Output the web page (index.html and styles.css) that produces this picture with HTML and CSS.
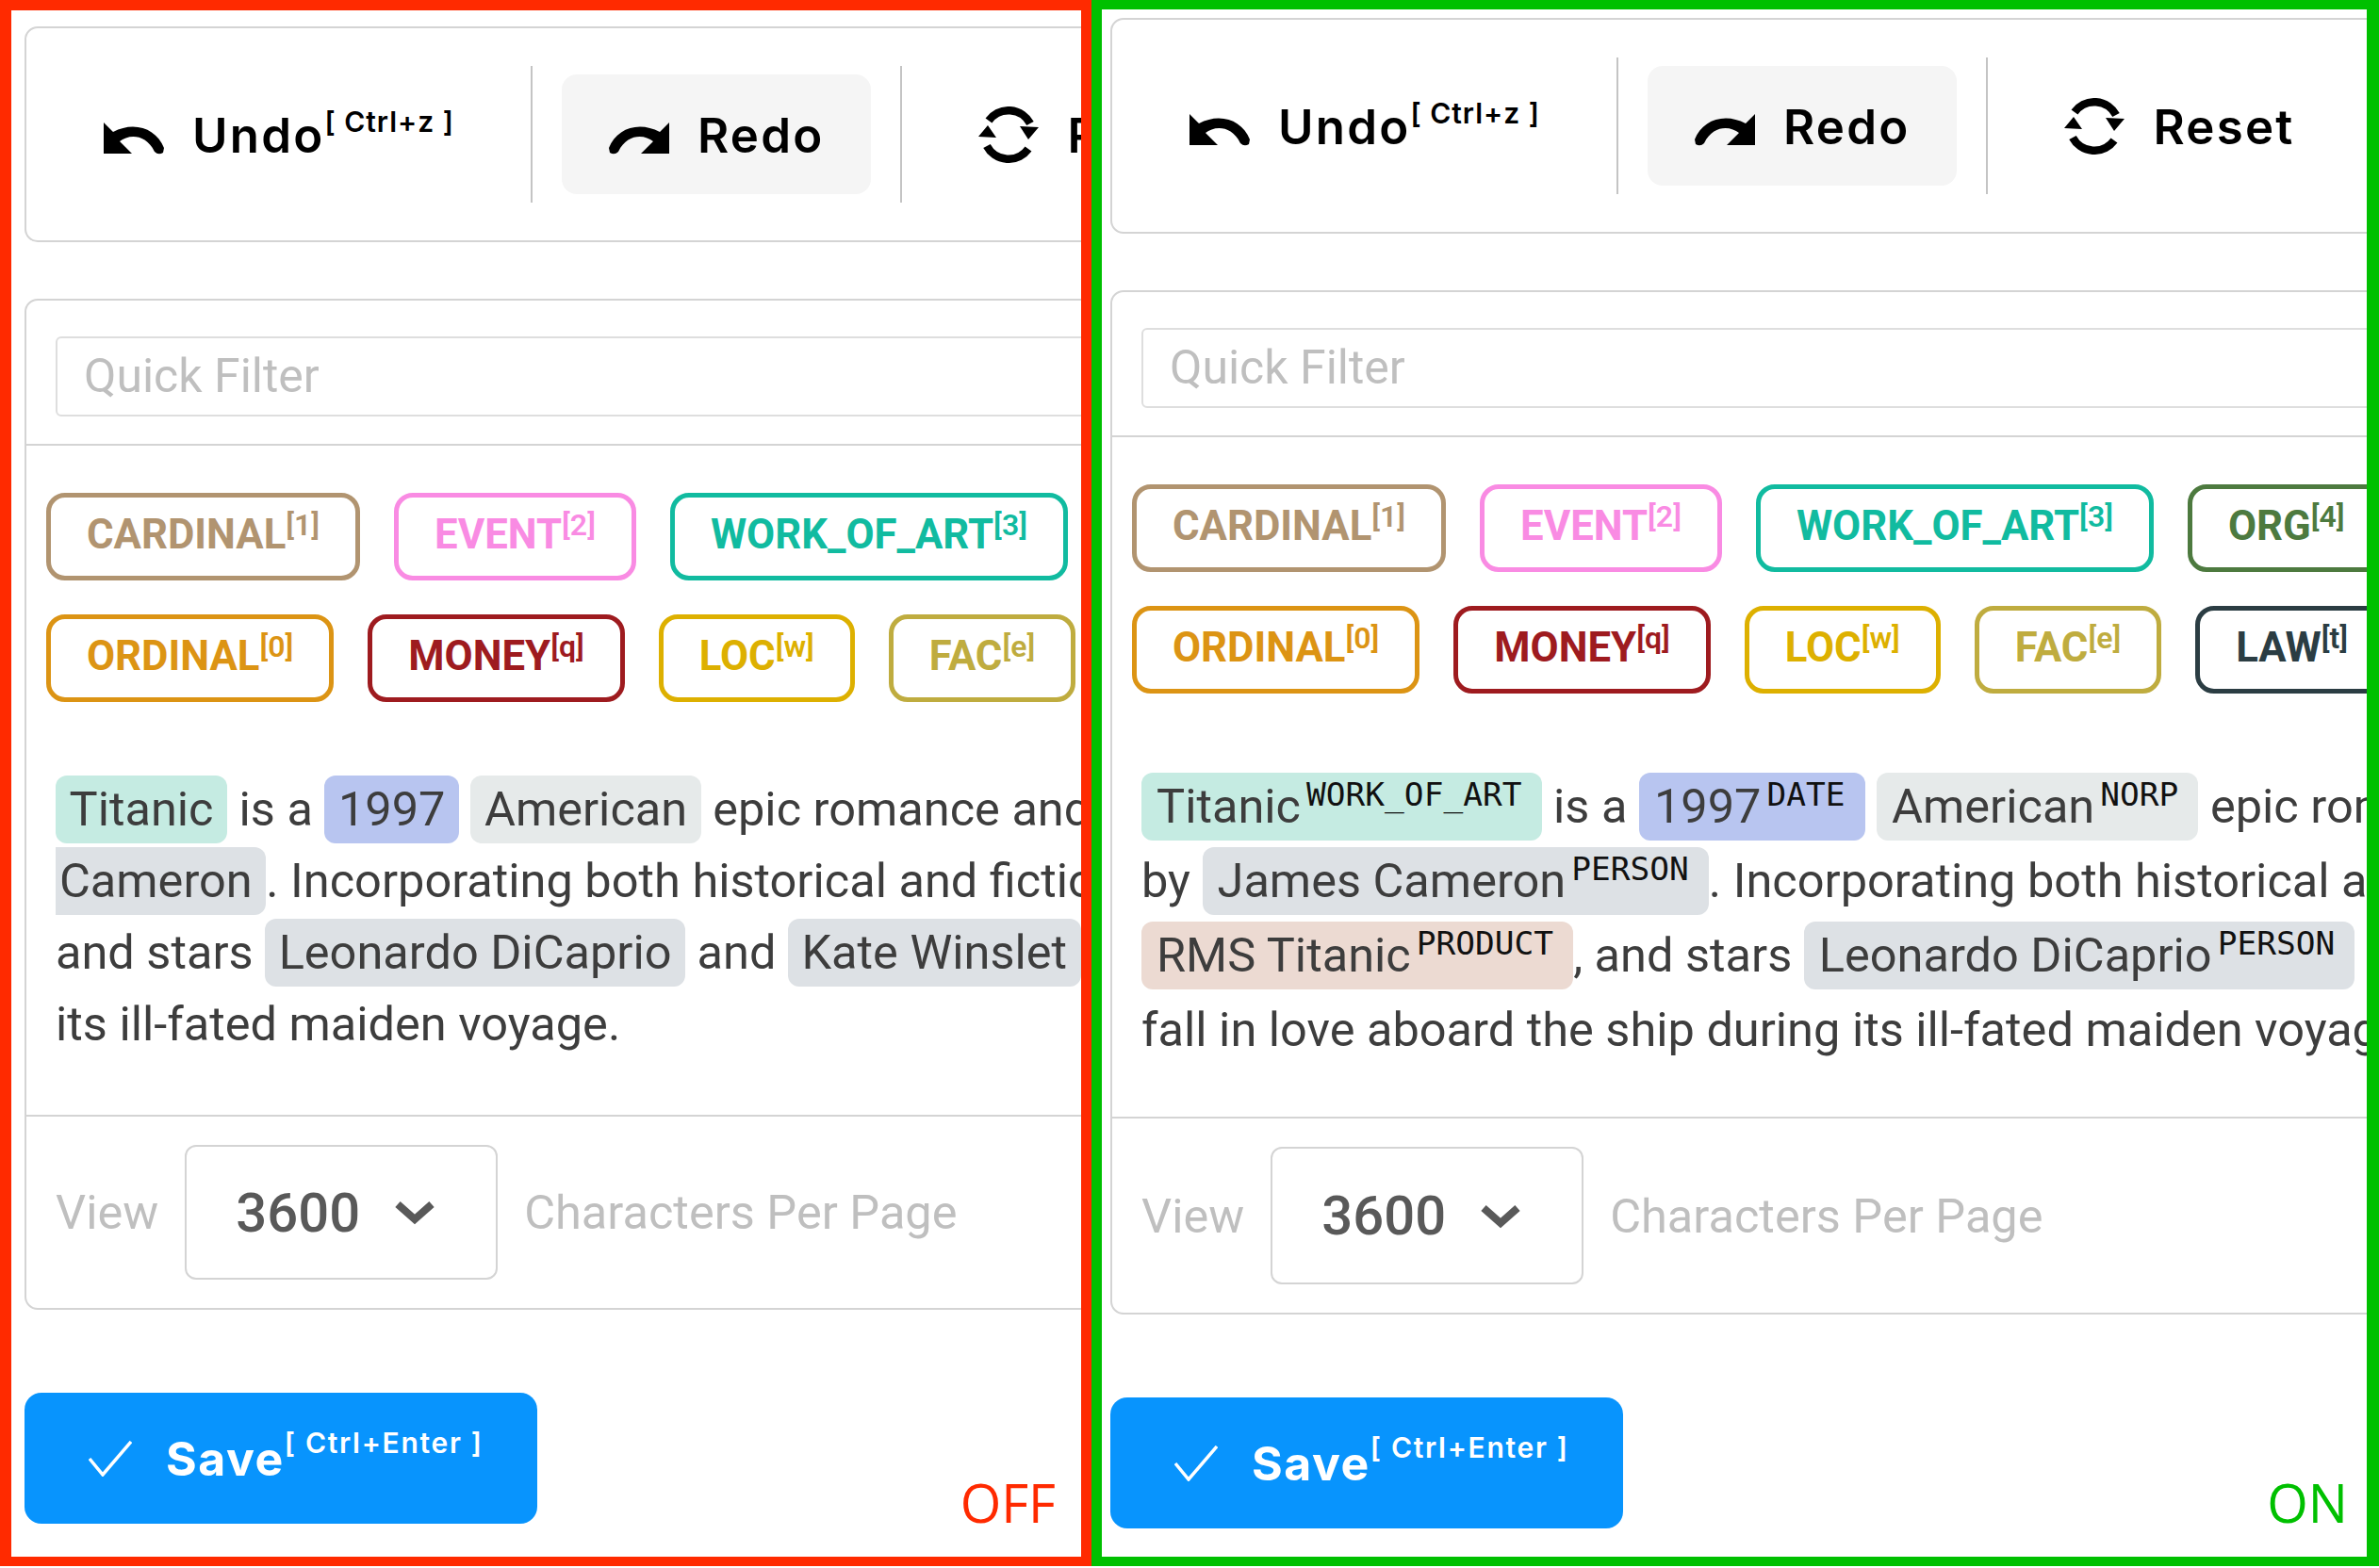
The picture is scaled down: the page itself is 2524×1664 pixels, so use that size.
FILE: index.html

```html
<!DOCTYPE html>
<html lang="en">
<head>
  <meta charset="UTF-8">
  <title>Label Display Off / On</title>
  <link rel="stylesheet" href="styles.css">
</head>
<body>
  <svg class="defs" width="0" height="0" aria-hidden="true">
    <symbol id="i-undo" viewBox="0 0 64 34">
      <path d="M0 0V33H30L17 20C26 13 44 11 54 31Q58 35 63 32L64 27C56 6 32-2 10 10Z"/>
    </symbol>
    <symbol id="i-reset" viewBox="0 0 64 60">
      <path d="M11 15A26 26 0 0 1 55 18M53 45A26 26 0 0 1 9 42" fill="none" stroke="#000" stroke-width="8.500"/>
      <path d="M44 21L53 35L64 22ZM0 32L10 20L19 33Z"/>
    </symbol>
  </svg>

  <div class="panels">
    <!-- without labels -->
    <section class="panel panel-off">
      <div class="card toolbar">
        <div class="tool"><svg class="ic-arrow"><use href="#i-undo"/></svg><span>Undo<sup>[ Ctrl+z ]</sup></span></div>
        <div class="sep"></div>
        <div class="tool active"><svg class="ic-arrow flip"><use href="#i-undo"/></svg><span>Redo</span></div>
        <div class="sep"></div>
        <div class="tool"><svg class="ic-reset"><use href="#i-reset"/></svg><span>Reset</span></div>
      </div>

      <div class="card editor">
        <div class="filter-wrap"><div class="filter">Quick Filter</div></div>
        <div class="tags">
          <div class="tag-row">
            <span class="tag c-cardinal">CARDINAL<sup>[1]</sup></span>
            <span class="tag c-event">EVENT<sup>[2]</sup></span>
            <span class="tag c-work">WORK_OF_ART<sup>[3]</sup></span>
          </div>
          <div class="tag-row">
            <span class="tag c-ordinal">ORDINAL<sup>[0]</sup></span>
            <span class="tag c-money">MONEY<sup>[q]</sup></span>
            <span class="tag c-loc">LOC<sup>[w]</sup></span>
            <span class="tag c-fac">FAC<sup>[e]</sup></span>
          </div>
        </div>
        <div class="doc">
          <div class="line"><mark class="hl h-work">Titanic</mark> is a <mark class="hl h-date">1997</mark> <mark class="hl h-norp">American</mark> epic romance and disaster film</div>
          <div class="line"><mark class="hl h-person cont">Cameron</mark>. Incorporating both historical and fictional aspects,</div>
          <div class="line">and stars <mark class="hl h-person">Leonardo DiCaprio</mark> and <mark class="hl h-person">Kate Winslet</mark> as members</div>
          <div class="line">its ill-fated maiden voyage.</div>
        </div>
        <div class="pager">
          <span>View</span>
          <div class="select"><span>3600</span><svg class="chev" viewBox="0 0 44 27"><path d="M4 5L22 21L40 5"/></svg></div>
          <span>Characters Per Page</span>
        </div>
      </div>

      <div class="save"><svg class="check" viewBox="0 0 46 38"><path d="M1 19L15 36L45 1"/></svg><span>Save<sup>[ Ctrl+Enter ]</sup></span></div>
      <div class="mode">OFF</div>
    </section>

    <!-- with labels -->
    <section class="panel panel-on">
      <div class="card toolbar">
        <div class="tool"><svg class="ic-arrow"><use href="#i-undo"/></svg><span>Undo<sup>[ Ctrl+z ]</sup></span></div>
        <div class="sep"></div>
        <div class="tool active"><svg class="ic-arrow flip"><use href="#i-undo"/></svg><span>Redo</span></div>
        <div class="sep"></div>
        <div class="tool"><svg class="ic-reset"><use href="#i-reset"/></svg><span>Reset</span></div>
      </div>

      <div class="card editor">
        <div class="filter-wrap"><div class="filter">Quick Filter</div></div>
        <div class="tags">
          <div class="tag-row">
            <span class="tag c-cardinal">CARDINAL<sup>[1]</sup></span>
            <span class="tag c-event">EVENT<sup>[2]</sup></span>
            <span class="tag c-work">WORK_OF_ART<sup>[3]</sup></span>
            <span class="tag c-org">ORG<sup>[4]</sup></span>
          </div>
          <div class="tag-row">
            <span class="tag c-ordinal">ORDINAL<sup>[0]</sup></span>
            <span class="tag c-money">MONEY<sup>[q]</sup></span>
            <span class="tag c-loc">LOC<sup>[w]</sup></span>
            <span class="tag c-fac">FAC<sup>[e]</sup></span>
            <span class="tag c-law">LAW<sup>[t]</sup></span>
          </div>
        </div>
        <div class="doc">
          <div class="line"><mark class="hl h-work">Titanic<sup>WORK_OF_ART</sup></mark> is a <mark class="hl h-date">1997<sup>DATE</sup></mark> <mark class="hl h-norp">American<sup>NORP</sup></mark> epic romance and</div>
          <div class="line">by <mark class="hl h-person">James Cameron<sup>PERSON</sup></mark>. Incorporating both historical and</div>
          <div class="line"><mark class="hl h-product">RMS Titanic<sup>PRODUCT</sup></mark>, and stars <mark class="hl h-person">Leonardo DiCaprio<sup>PERSON</sup></mark> and</div>
          <div class="line">fall in love aboard the ship during its ill-fated maiden voyage.</div>
        </div>
        <div class="pager">
          <span>View</span>
          <div class="select"><span>3600</span><svg class="chev" viewBox="0 0 44 27"><path d="M4 5L22 21L40 5"/></svg></div>
          <span>Characters Per Page</span>
        </div>
      </div>

      <div class="save"><svg class="check" viewBox="0 0 46 38"><path d="M1 19L15 36L45 1"/></svg><span>Save<sup>[ Ctrl+Enter ]</sup></span></div>
      <div class="mode">ON</div>
    </section>
  </div>
</body>
</html>
```

FILE: styles.css

```css
html, body {
  margin: 0;
  background: #fff;
}
body {
  font-family: Roboto, "Liberation Sans", sans-serif;
  color: #3d3d3d;
}
.defs {
  position: absolute;
}
.panels {
  display: flex;
  width: 2524px;
  height: 1662px;
}
.panel {
  position: relative;
  box-sizing: border-box;
  height: 100%;
  overflow: hidden;
  background: #fff;
}
.panel-off {
  width: 1158px;
  border: solid #ff2a00;
  border-width: 11px 11px 10px 12px;
  padding: 17px 0 0 14px;
}
.panel-on {
  width: 1366px;
  border: solid #00c000;
  border-width: 10px 13px 10px 11px;
  padding: 9px 0 0 9px;
}

.card {
  box-sizing: border-box;
  width: 1500px;
  background: #fff;
  border: 2px solid #d4d4d4;
  border-radius: 14px;
}

/* toolbar */
.toolbar {
  display: flex;
  align-items: center;
  gap: 31px;
  height: 229px;
  padding-left: 32px;
  font-family: Inter, "Noto Sans", sans-serif;
  font-weight: 600;
  font-size: 51px;
  letter-spacing: 2.2px;
  color: #000;
}
.tool {
  display: flex;
  align-items: center;
  gap: 30px;
  height: 127px;
  padding: 0 50px;
  border-radius: 16px;
  white-space: nowrap;
}
.tool span {
  padding-top: 2px;
}
.tool.active {
  background: #f5f5f5;
}
.tool sup {
  font-size: 30px;
  letter-spacing: 1px;
  line-height: 0;
  vertical-align: 22px;
}
.sep {
  width: 2px;
  height: 145px;
  background: #c4c4c4;
}
.ic-arrow {
  width: 64px;
  height: 34px;
  margin-top: 8px;
}
.ic-arrow.flip {
  transform: scaleX(-1);
}
.ic-reset {
  width: 64px;
  height: 60px;
}

/* editor card */
.editor {
  margin-top: 60px;
}
.panel-off .editor {
  height: 1073px;
}
.panel-on .editor {
  height: 1087px;
}
.filter-wrap {
  padding: 38px 0 29px 31px;
  border-bottom: 2px solid #d4d4d4;
}
.filter {
  box-sizing: border-box;
  width: 1400px;
  height: 85px;
  padding-left: 28px;
  line-height: 81px;
  font-size: 50px;
  color: #bfbfbf;
  border: 2px solid #dedede;
  border-radius: 6px;
}

.tags {
  display: flex;
  flex-direction: column;
  gap: 36px;
  padding: 50px 0 0 21px;
}
.tag-row {
  display: flex;
  gap: 36px;
}
.tag {
  box-sizing: border-box;
  height: 93px;
  padding: 0 38px;
  line-height: 78px;
  border: 5px solid currentColor;
  border-radius: 20px;
  font-size: 43.7px;
  font-weight: 700;
  white-space: nowrap;
}
.tag sup {
  font-size: 32px;
  font-weight: 600;
  line-height: 0;
  vertical-align: 14px;
}
.c-cardinal { color: #b19470; }
.c-event { color: #f98be3; }
.c-work { color: #11bba0; }
.c-org { color: #4d7a3f; }
.c-ordinal { color: #dc9414; }
.c-money { color: #9e1b1f; }
.c-loc { color: #ddb000; }
.c-fac { color: #bfac3f; }
.c-law { color: #2b3d43; }

.doc {
  padding-left: 31px;
  font-size: 50.5px;
  white-space: nowrap;
}
.panel-off .doc {
  height: 362px;
  margin-top: 76px;
}
.panel-off .line {
  height: 76px;
  line-height: 76px;
}
.panel-on .doc {
  height: 369px;
  margin-top: 80px;
}
.panel-on .line {
  height: 79px;
  line-height: 79px;
}
.hl {
  display: inline-block;
  height: 72px;
  line-height: 72px;
  padding: 0 14.5px;
  border-radius: 12px;
  color: #3d3d3d;
}
.panel-on .hl {
  padding: 0 16px;
}
.hl.cont {
  border-radius: 0 12px 12px 0;
  padding-left: 4px;
}
.hl sup {
  font-family: "DejaVu Sans Mono", monospace;
  font-size: 34.5px;
  color: #111;
  line-height: 0;
  vertical-align: 18px;
  margin: 0 5px 0 6px;
}
.h-work { background: #c5ebe2; }
.h-date { background: #b8c5f0; }
.h-norp { background: #e6eaea; }
.h-person { background: #dde1e5; }
.h-product { background: #ecdad2; }

.pager {
  display: flex;
  align-items: center;
  gap: 28px;
  padding: 30px 0 0 31px;
  border-top: 2px solid #d4d4d4;
  font-size: 50.5px;
  color: #bfbfbf;
  white-space: nowrap;
}
.select {
  box-sizing: border-box;
  display: flex;
  align-items: center;
  justify-content: center;
  gap: 36px;
  width: 332px;
  height: 143px;
  padding-right: 12px;
  border: 2px solid #d4d4d4;
  border-radius: 12px;
  font-size: 58px;
  font-weight: 500;
  color: #595959;
}
.panel-on .select {
  height: 146px;
}
.chev {
  width: 44px;
  height: 27px;
  fill: none;
  stroke: #595959;
  stroke-width: 8;
}

.save {
  display: inline-flex;
  align-items: center;
  gap: 36px;
  box-sizing: border-box;
  height: 139px;
  margin-top: 88px;
  padding: 0 57px 0 68px;
  background: #0894fd;
  border-radius: 18px;
  color: #fff;
  font-family: Inter, "Noto Sans", sans-serif;
  font-weight: 700;
  font-size: 50px;
  letter-spacing: 1.5px;
  white-space: nowrap;
}
.save sup {
  font-size: 30px;
  font-weight: 600;
  letter-spacing: 1.7px;
  line-height: 0;
  vertical-align: 24px;
}
.check {
  width: 46px;
  height: 38px;
  fill: none;
  stroke: #fff;
  stroke-width: 3.5;
}
.mode {
  position: absolute;
  bottom: 28px;
  right: 27px;
  font-family: "Open Sans", sans-serif;
  font-size: 56px;
  line-height: 60px;
}
.panel-off .mode {
  color: #ff2a00;
}
.panel-on .mode {
  color: #00c000;
  right: 20px;
}
```
